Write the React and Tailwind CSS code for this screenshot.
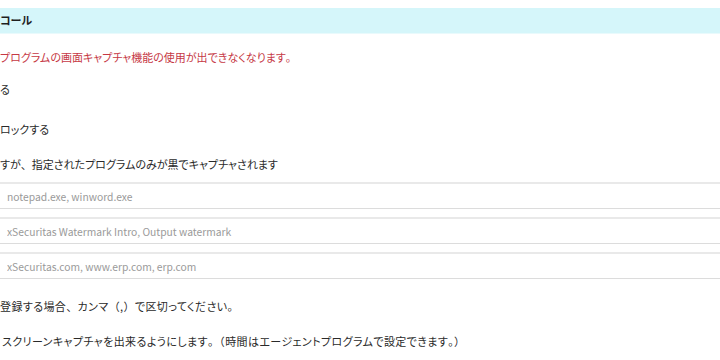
import React from "react";

const jp = "font-['Noto_Sans_CJK_JP','Noto_Sans',sans-serif] [font-feature-settings:'palt']";

// full-width punctuation keeps its em box, as in the reference
function P({ children }) {
  return <span className="[font-feature-settings:normal]">{children}</span>;
}

function Field({ placeholder }) {
  return (
    <input
      type="text"
      placeholder={placeholder}
      className={`block w-full h-[27px] border-t-2 border-b border-t-[#e9e9e9] border-b-[#dcdcdc] bg-white pl-[7px] text-[10.3px] text-[#333] placeholder:text-[#9a9a9a] outline-none ${jp}`}
    />
  );
}

export default function App() {
  return (
    <div className={`w-[720px] h-[360px] overflow-hidden bg-white pt-[8px] text-[#2a2a2a] ${jp}`}>
      {/* Section header */}
      <div className="h-[26px] bg-[#d5f6fa] border-b border-[#e9fafc] flex items-center">
        <h2 className="text-[11px] font-bold text-[#1f1f1f] leading-none">コール</h2>
      </div>

      <p className="mt-[13px] h-[20px] leading-[20px] text-[11px] text-[#c63845]">
        プログラムの画面キャプチャ機能の使用が出できなくなります<P>。</P>
      </p>

      <p className="mt-[12px] h-[20px] leading-[20px] text-[11px]">る</p>

      <p className="mt-[20px] h-[20px] leading-[20px] text-[11px]">ロックする</p>

      <p className="mt-[15px] h-[20px] leading-[20px] text-[11px]">
        すが<P>、</P>指定されたプログラムのみが黒でキャプチャされます
      </p>

      <div className="mt-[8px] flex flex-col gap-[8px]">
        <Field placeholder="notepad.exe, winword.exe" />
        <Field placeholder="xSecuritas Watermark Intro, Output watermark" />
        <Field placeholder="xSecuritas.com, www.erp.com, erp.com" />
      </div>

      <p className="mt-[17px] h-[20px] leading-[20px] text-[11px] tracking-[0.4px]">
        登録する場合<P>、</P>カンマ<P>（,）</P>で区切ってください<P>。</P>
      </p>

      <p className="mt-[15px] h-[20px] leading-[20px] text-[11px] tracking-[0.4px] pl-[2px]">
        スクリーンキャプチャを出来るようにします<P>。（</P>時間はエージェントプログラムで設定できます<P>。）</P>
      </p>
    </div>
  );
}
